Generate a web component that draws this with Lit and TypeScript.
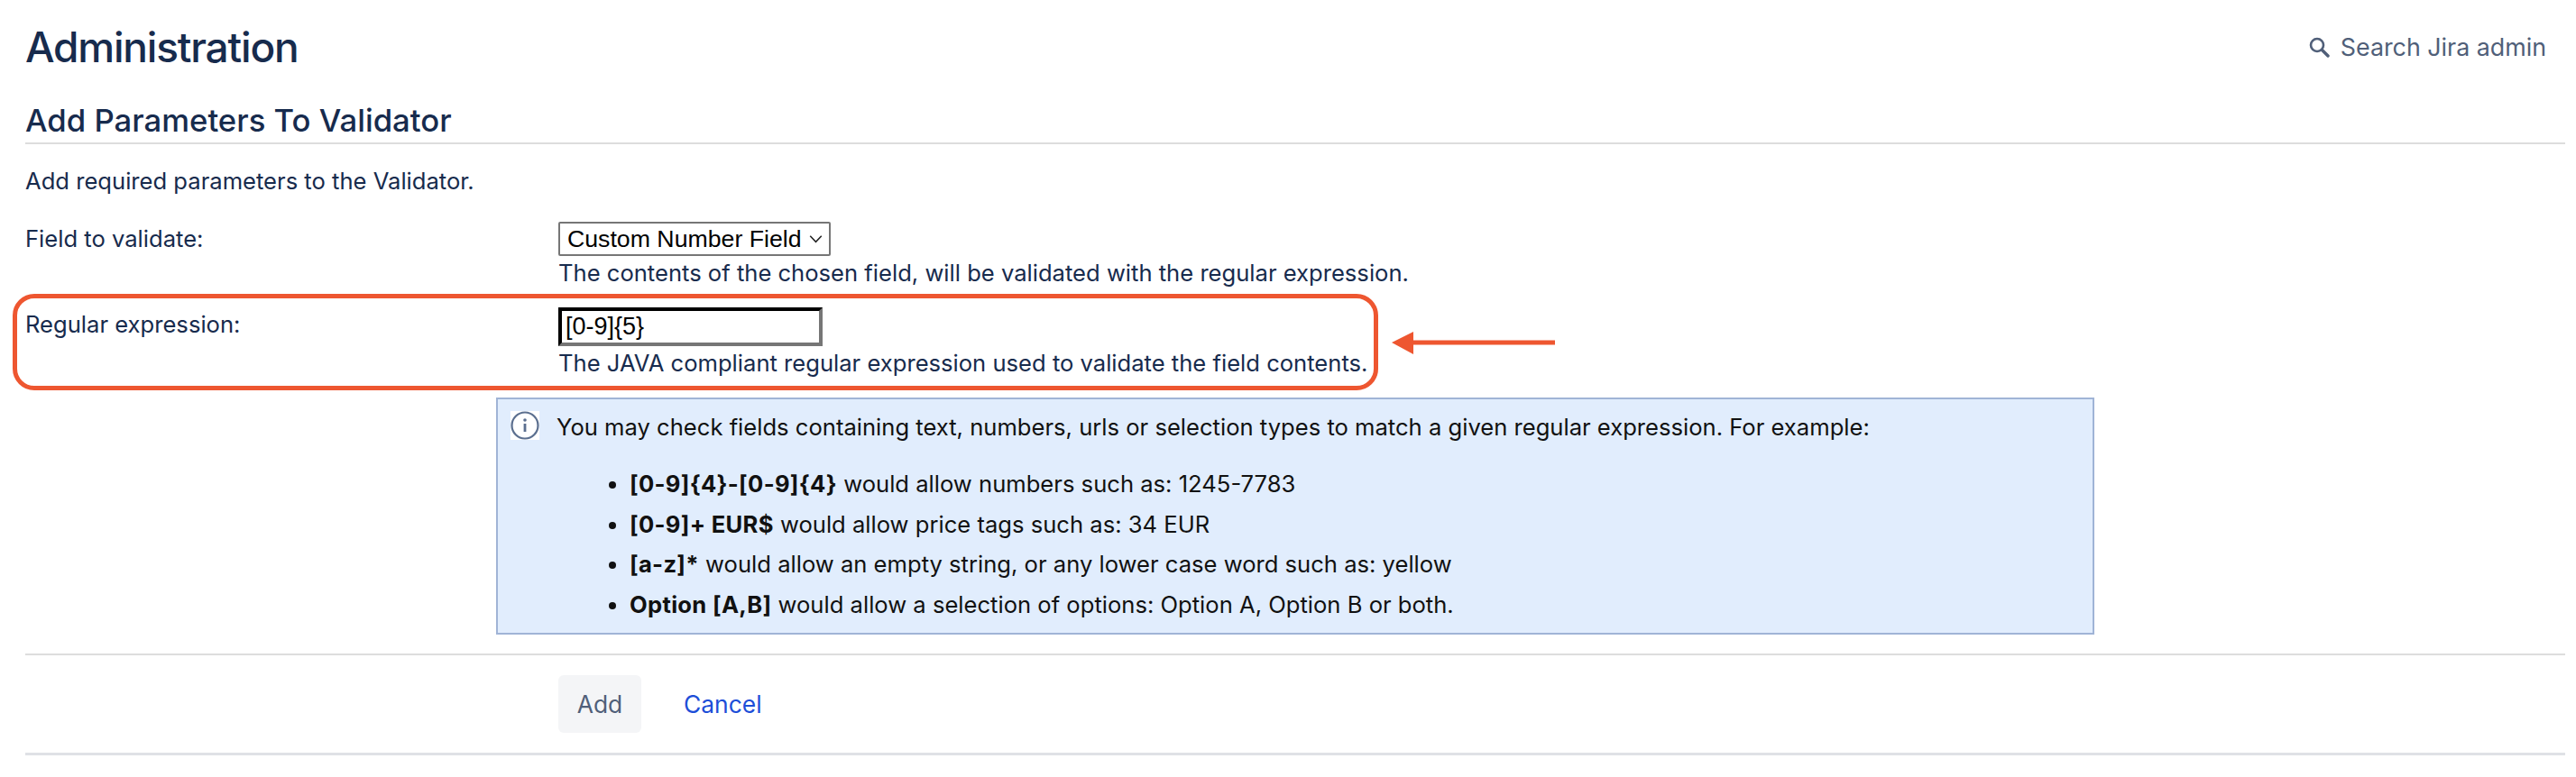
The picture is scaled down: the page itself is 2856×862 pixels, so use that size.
import { LitElement, html, css } from 'lit';
import { customElement } from 'lit/decorators.js';

const EXAMPLES = [
  { code: '[0-9]{4}-[0-9]{4}', rest: ' would allow numbers such as: 1245-7783' },
  { code: '[0-9]+ EUR$', rest: ' would allow price tags such as: 34 EUR' },
  { code: '[a-z]*', rest: ' would allow an empty string, or any lower case word such as: yellow' },
  { code: 'Option [A,B]', rest: ' would allow a selection of options: Option A, Option B or both.' },
];

@customElement('app-root')
export class AppRoot extends LitElement {
  static styles = css`
    :host {
      display: block;
      position: relative;
      height: 862px;
      padding: 0 12px 0 28px;
      box-sizing: border-box;
      background: #fff;
      color: #172b4d;
      font-family: Inter, 'Noto Sans', sans-serif;
      font-size: 25.6px;
      line-height: 38px;
    }
    .top {
      display: flex;
      justify-content: space-between;
      align-items: center;
      height: 104px;
    }
    h1 {
      margin: 0;
      font-size: 46px;
      line-height: 56px;
      font-weight: 500;
      letter-spacing: -1.2px;
    }
    .search {
      display: flex;
      align-items: center;
      gap: 12px;
      color: #505f79;
      padding-right: 21px;
      font-size: 26.8px;
    }
    .search svg {
      width: 24px;
      height: 24px;
    }
    h2 {
      margin: 0;
      height: 56px;
      box-sizing: border-box;
      border-bottom: 2px solid #ddd;
      font-size: 34.7px;
      line-height: 38px;
      padding-top: 10px;
      font-weight: 500;
    }
    .intro {
      margin: 22px 0 0;
    }
    .row {
      display: grid;
      grid-template-columns: 591px 1fr;
    }
    .row.first {
      margin-top: 26px;
    }
    .row.second {
      margin-top: 19px;
    }
    .row label {
      display: block;
    }
    .select {
      display: inline-flex;
      align-items: center;
      justify-content: space-between;
      box-sizing: border-box;
      width: 302px;
      height: 38px;
      padding: 0 7px 0 8px;
      border: 2px solid #767676;
      border-radius: 2px;
      background: #fff;
      color: #000;
      font-family: 'Liberation Sans', Arial, sans-serif;
      font-size: 26.7px;
    }
    .select svg {
      width: 15px;
      height: 10px;
    }
    input {
      display: block;
      box-sizing: border-box;
      width: 293px;
      height: 43px;
      padding: 0 4px;
      border: 4px inset #767676;
      border-top-color: #222;
      border-left-color: #222;
      border-right-color: #767676;
      border-bottom-color: #767676;
      background: #fff;
      color: #000;
      font-family: 'Liberation Sans', Arial, sans-serif;
      font-size: 27px;
      outline: none;
    }
    .info {
      box-sizing: border-box;
      width: 1772px;
      height: 263px;
      margin: 19px 0 0 522px;
      padding: 12px 14px 0;
      display: grid;
      grid-template-columns: 32px 1fr;
      column-gap: 19px;
      border: 2px solid #a0b4d6;
      background: #e1edfd;
      color: #111;
    }
    .info-icon {
      width: 32px;
      height: 32px;
      margin-top: 1px;
      background: #fff;
    }
    .info p {
      margin: 0;
    }
    .info ul {
      margin: 22px 0 0;
      padding: 0 0 0 81px;
    }
    .info li {
      line-height: 44.7px;
    }
    .info b {
      letter-spacing: 0.3px;
    }
    .actions {
      margin-top: 21px;
      border-top: 2px solid #ddd;
      border-bottom: 3px solid #dfe1e6;
      height: 113px;
      box-sizing: border-box;
      padding: 22px 0 0 591px;
      display: flex;
      align-items: flex-start;
      gap: 47px;
      font-size: 26.4px;
    }
    .btn {
      width: 92px;
      height: 64px;
      border: 0;
      border-radius: 6px;
      background: #f4f5f7;
      color: #505f79;
      font: inherit;
      padding: 0;
    }
    .cancel {
      line-height: 64px;
      color: #1d4ed8;
      text-decoration: none;
    }
    .callout {
      position: absolute;
      left: 14px;
      top: 326px;
      width: 1514px;
      height: 107px;
      box-sizing: border-box;
      border: 5px solid #ee5630;
      border-radius: 24px;
      pointer-events: none;
    }
    .arrow {
      position: absolute;
      left: 1543px;
      top: 366px;
      width: 181px;
      height: 28px;
      pointer-events: none;
    }
  `;

  render() {
    return html`
      <div class="top">
        <h1>Administration</h1>
        <div class="search">
          <svg viewBox="0 0 24 24" fill="none" stroke="#505f79" stroke-width="2.6" stroke-linecap="round">
            <circle cx="10" cy="10" r="7"></circle>
            <path d="M15.5 15.5 L22 22" stroke-width="3.4"></path>
          </svg>
          <span>Search Jira admin</span>
        </div>
      </div>
      <h2>Add Parameters To Validator</h2>
      <p class="intro">Add required parameters to the Validator.</p>

      <div class="row first">
        <label>Field to validate:</label>
        <div>
          <div class="select">
            <span>Custom Number Field</span>
            <svg viewBox="0 0 18 12" fill="none" stroke="#222" stroke-width="1.8">
              <path d="M1.5 2 L9 10 L16.5 2"></path>
            </svg>
          </div>
          <div class="hint">The contents of the chosen field, will be validated with the regular expression.</div>
        </div>
      </div>

      <div class="row second">
        <label>Regular expression:</label>
        <div>
          <input type="text" value="[0-9]{5}" />
          <div class="hint">The JAVA compliant regular expression used to validate the field contents.</div>
        </div>
      </div>

      <div class="info">
        <svg class="info-icon" viewBox="0 0 32 32" fill="none">
          <circle cx="16" cy="16" r="14.5" stroke="#5b6f8f" stroke-width="2.2"></circle>
          <rect x="14.6" y="14" width="2.8" height="9" fill="#5b6f8f"></rect>
          <circle cx="16" cy="10" r="1.8" fill="#5b6f8f"></circle>
        </svg>
        <div>
          <p>You may check fields containing text, numbers, urls or selection types to match a given regular expression. For example:</p>
          <ul>
            ${EXAMPLES.map(e => html`<li><b>${e.code}</b>${e.rest}</li>`)}
          </ul>
        </div>
      </div>

      <div class="actions">
        <button class="btn">Add</button>
        <a class="cancel" href="#">Cancel</a>
      </div>

      <div class="callout"></div>
      <svg class="arrow" viewBox="0 0 181 28">
        <path d="M0 14 L24 2 L24 11.5 L181 11.5 L181 16.5 L24 16.5 L24 27 Z" fill="#ee5630"></path>
      </svg>
    `;
  }
}
